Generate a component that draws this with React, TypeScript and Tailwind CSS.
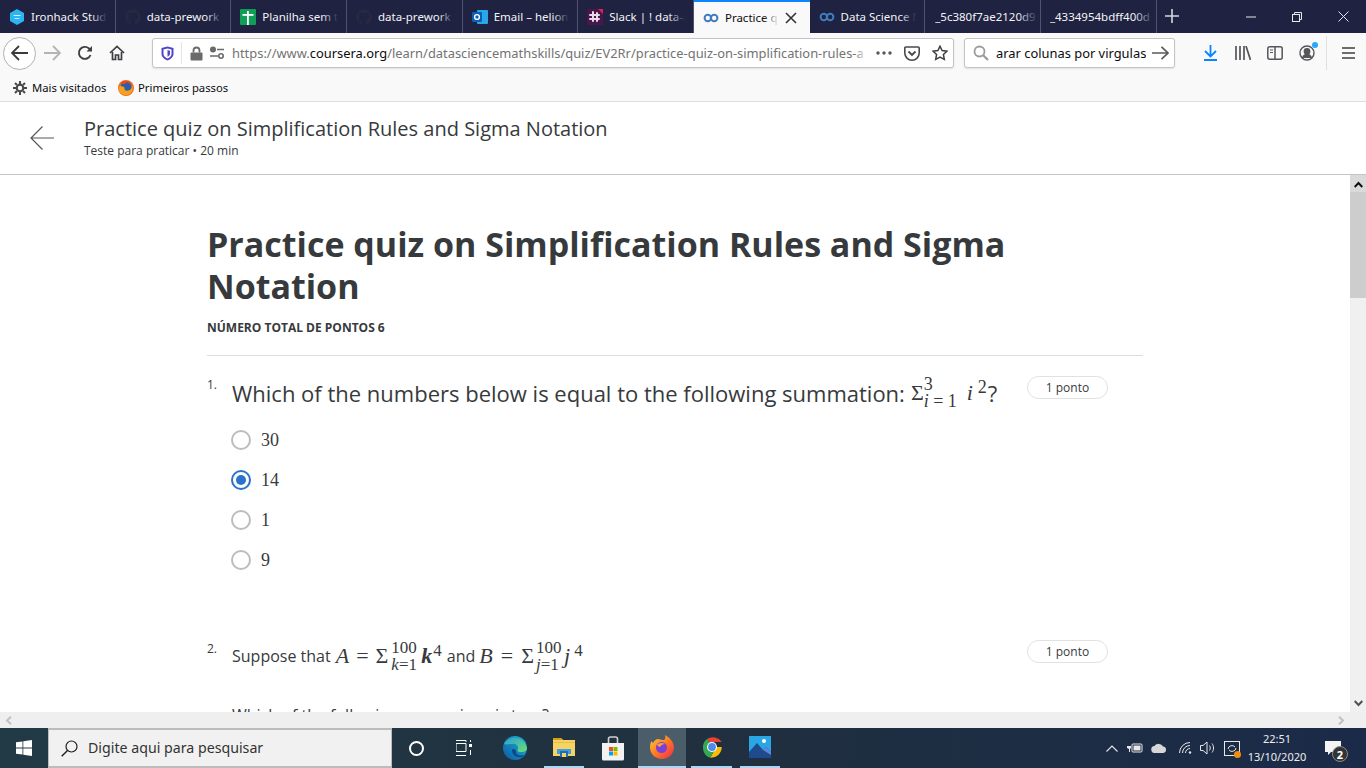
import React from "react";
import { FaGithub } from "react-icons/fa";

const ui = { fontFamily: '"Noto Sans", "Open Sans", sans-serif' };
const os = { fontFamily: '"Open Sans", sans-serif' };
const serif = { fontFamily: '"Liberation Serif", serif' };

function Infinity16({ color = "#3f7cc0" }: { color?: string }) {
  return (
    <svg width="16" height="16" viewBox="0 0 16 16" fill="none">
      <circle cx="4.8" cy="8" r="3.2" stroke={color} strokeWidth="2" />
      <circle cx="11.2" cy="8" r="3.2" stroke={color} strokeWidth="2" />
    </svg>
  );
}
function IronIcon() {
  return (
    <svg width="16" height="16" viewBox="0 0 16 16">
      <path d="M8 0l7 4v8l-7 4-7-4V4z" fill="#2bb5f2" />
      <rect x="4.5" y="6" width="7" height="1" fill="#fff" opacity=".8" />
      <rect x="5.5" y="9" width="5" height="1" fill="#fff" opacity=".7" />
    </svg>
  );
}
function SheetIcon() {
  return (
    <svg width="16" height="16" viewBox="0 0 16 16">
      <rect width="16" height="16" rx="1" fill="#0f9d58" />
      <rect x="2.500" y="5" width="11" height="1.800" fill="#fff" />
      <rect x="7" y="2" width="1.800" height="14" fill="#fff" />
    </svg>
  );
}
function OutlookIcon() {
  return (
    <svg width="16" height="16" viewBox="0 0 16 16">
      <rect x="5" y="1" width="11" height="14" rx="1" fill="#28a8ea" />
      <rect x="0" y="3" width="10" height="10" rx="1" fill="#0a5fb4" />
      <circle cx="5" cy="8" r="2.4" fill="none" stroke="#fff" strokeWidth="1.4" />
    </svg>
  );
}
function SlackIcon() {
  return (
    <svg width="16" height="16" viewBox="0 0 16 16">
      <rect width="16" height="16" fill="#4a154b" />
      <path d="M11 0h5v5z" fill="#e01e5a" />
      <g stroke="#e8dbe8" strokeWidth="2" strokeLinecap="round">
        <path d="M6 3v9" />
        <path d="M10 4v8" />
        <path d="M3 6h9" />
        <path d="M3 10h9" />
      </g>
    </svg>
  );
}

function Tab({
  icon,
  label,
  active,
}: {
  icon?: React.ReactNode;
  label: string;
  active?: boolean;
}) {
  return (
    <div
      className={
        active
          ? "relative flex h-[33px] w-[115.67px] shrink-0 items-center gap-[6px] border-t-2 border-[#0a84ff] bg-[#f9f9fa] pl-[9px] pr-[13px] text-[#0c0c0d]"
          : "relative flex h-[33px] w-[115.67px] shrink-0 items-center gap-[6px] border-r border-[#4f5270] pl-[9px] pr-[8px] text-[#f4f4f6]"
      }
    >
      {icon && <span className="flex h-4 w-4 shrink-0 items-center justify-center">{icon}</span>}
      <span className="relative flex-1 overflow-hidden whitespace-nowrap text-[11.5px] leading-[16px]">
        {label}
        <span
          className={
            active
              ? "absolute inset-y-0 right-0 w-4 bg-gradient-to-r from-transparent to-[#f9f9fa]"
              : "absolute inset-y-0 right-0 w-4 bg-gradient-to-r from-transparent to-[#1f2241]"
          }
        />
      </span>
      {active && (
        <svg width="12" height="12" viewBox="0 0 12 12" className="shrink-0" stroke="#333" strokeWidth="1.6">
          <path d="M1 1l10 10M11 1L1 11" />
        </svg>
      )}
    </div>
  );
}

function TabBar() {
  return (
    <div className="flex h-[33px] items-stretch bg-[#1f2241]" style={ui}>
      <Tab icon={<IronIcon />} label="Ironhack Stud" />
      <Tab icon={<FaGithub size={16} color="#26293f" />} label="data-prework" />
      <Tab icon={<SheetIcon />} label="Planilha sem t" />
      <Tab icon={<FaGithub size={16} color="#26293f" />} label="data-prework" />
      <Tab icon={<OutlookIcon />} label="Email – helion" />
      <Tab icon={<SlackIcon />} label="Slack | ! data-a" />
      <Tab icon={<Infinity16 />} label="Practice q" active />
      <Tab icon={<Infinity16 />} label="Data Science M" />
      <div className="flex h-[33px] w-[115.67px] shrink-0 items-center border-r border-[#4f5270] pl-[10px] pr-[2px] text-[#f4f4f6]">
        <span className="relative flex-1 overflow-hidden whitespace-nowrap text-[11.5px] leading-[16px]">
          _5c380f7ae2120d9
          <span className="absolute inset-y-0 right-0 w-5 bg-gradient-to-r from-transparent to-[#1f2241]" />
        </span>
      </div>
      <div className="flex h-[33px] w-[115.67px] shrink-0 items-center border-r border-[#4f5270] pl-[9px] pr-[2px] text-[#f4f4f6]">
        <span className="relative flex-1 overflow-hidden whitespace-nowrap text-[11.5px] leading-[16px]">
          _4334954bdff400d
          <span className="absolute inset-y-0 right-0 w-5 bg-gradient-to-r from-transparent to-[#1f2241]" />
        </span>
      </div>
      <div className="flex w-[30px] items-center justify-center pb-[1px]">
        <svg width="14" height="14" viewBox="0 0 14 14" stroke="#d8d8de" strokeWidth="1.6">
          <path d="M7 0v14M0 7h14" />
        </svg>
      </div>
      <div className="flex flex-1 items-center justify-end">
        <div className="flex w-[46px] justify-center">
          <svg width="10" height="10" viewBox="0 0 10 10" stroke="#e8e8ee"><path d="M0 5h10" /></svg>
        </div>
        <div className="flex w-[46px] justify-center">
          <svg width="10" height="10" viewBox="0 0 10 10" stroke="#e8e8ee" fill="none">
            <rect x=".5" y="2.5" width="7" height="7" />
            <path d="M2.5 2.5v-2h7v7h-2" />
          </svg>
        </div>
        <div className="flex w-[46px] justify-center">
          <svg width="11" height="11" viewBox="0 0 11 11" stroke="#e8e8ee"><path d="M.5.5l10 10M10.5.5l-10 10" /></svg>
        </div>
      </div>
    </div>
  );
}

function ToolSlot({ w, children }: { w: number; children: React.ReactNode }) {
  return (
    <div className="flex shrink-0 items-center justify-center" style={{ width: w }}>
      {children}
    </div>
  );
}

function Toolbar() {
  return (
    <div className="flex h-[40px] items-center bg-[#f9f9fa] pl-[3px]" style={ui}>
      <div className="flex h-[33px] w-[33px] shrink-0 items-center justify-center rounded-full border border-[#b1b1b3] bg-white">
        <svg width="17" height="16" viewBox="0 0 17 16" fill="none" stroke="#3a3a3c" strokeWidth="1.8">
          <path d="M1 8h16M8 1L1 8l7 7" />
        </svg>
      </div>
      <ToolSlot w={33}>
        <svg width="17" height="16" viewBox="0 0 17 16" fill="none" stroke="#b4b4b6" strokeWidth="1.8">
          <path d="M0 8h16M9 1l7 7-7 7" />
        </svg>
      </ToolSlot>
      <ToolSlot w={32}>
        <svg width="16" height="16" viewBox="0 0 16 16" fill="none" stroke="#3f3f42" strokeWidth="1.9">
          <path d="M13.5 10A6 6 0 1 1 12 3.5L14 5.5" />
          <path d="M15 1v5.5H9.5" fill="#3f3f42" stroke="none" />
        </svg>
      </ToolSlot>
      <ToolSlot w={32}>
        <svg width="16" height="16" viewBox="0 0 16 16" fill="none" stroke="#3f3f42" strokeWidth="1.7">
          <path d="M1 8l7-6.5L15 8" />
          <path d="M3.5 7v7.5h3V10h3v4.5h3V7" />
        </svg>
      </ToolSlot>
      <div className="ml-[19px] flex h-[30px] w-[802px] shrink-0 items-center rounded-[3px] border border-[#c4c4c6] bg-white shadow-[0_1px_2px_rgba(0,0,0,0.1)]">
        <span className="ml-[6px] flex w-[16px] justify-center">
          <svg width="13" height="15" viewBox="0 0 13 15">
            <path d="M6.5 0.5L12.5 2v6c0 3-3 5.5-6 6.5-3-1-6-3.5-6-6.5V2z" fill="#4f46c8" />
            <path d="M6.5 2.5L10.5 3.5v4.5c0 2-2 3.7-4 4.5-2-.8-4-2.5-4-4.5V3.5z" fill="#fff" />
            <path d="M6.5 4L9 4.7v3c0 1.3-1.2 2.4-2.500 3z" fill="#4f46c8" />
          </svg>
        </span>
        <span className="ml-[6px] h-[22px] w-px bg-[#e3e3e5]" />
        <span className="ml-[8px] flex">
          <svg width="13" height="15" viewBox="0 0 13 15">
            <path d="M3.5 6.5V4.5a3 3 0 0 1 6 0v2" fill="none" stroke="#6a6a6c" strokeWidth="1.8" />
            <rect x="0.5" y="6.5" width="12" height="8" rx="1" fill="#6a6a6c" />
          </svg>
        </span>
        <span className="ml-[6px] flex">
          <svg width="16" height="14" viewBox="0 0 16 14" fill="none" stroke="#6a6a6c" strokeWidth="1.6">
            <circle cx="4" cy="3.5" r="2.2" fill="#6a6a6c" />
            <path d="M8 3.5h7M1 10h8" />
            <circle cx="12" cy="10" r="2.2" />
          </svg>
        </span>
        <span className="relative ml-[7px] w-[635px] overflow-hidden whitespace-nowrap text-[12.9px] leading-[18px] text-[#737373]">
          https://www.<span className="text-[#0c0c0d]">coursera.org</span>/learn/datasciencemathskills/quiz/EV2Rr/practice-quiz-on-simplification-rules-a
          <span className="absolute inset-y-0 right-0 w-3 bg-gradient-to-r from-transparent to-white" />
        </span>
        <span className="ml-[9px] flex">
          <svg width="16" height="4" viewBox="0 0 16 4" fill="#56565a">
            <circle cx="2" cy="2" r="1.7" />
            <circle cx="8" cy="2" r="1.7" />
            <circle cx="14" cy="2" r="1.7" />
          </svg>
        </span>
        <span className="ml-[12px] flex">
          <svg width="16" height="15" viewBox="0 0 16 15" fill="none" stroke="#4a4a4d" strokeWidth="1.6">
            <path d="M1.8 1h12.4a1 1 0 0 1 1 1v5a7.2 7.2 0 0 1-14.4 0V2a1 1 0 0 1 1-1z" />
            <path d="M4.5 5.5L8 9l3.5-3.5" strokeWidth="1.9" />
          </svg>
        </span>
        <span className="ml-[6px] flex h-full w-[27px] items-center justify-center">
          <svg width="16" height="16" viewBox="0 0 16 16" fill="none" stroke="#3f3f42" strokeWidth="1.5">
            <path d="M8 1.2l2.1 4.4 4.8.6-3.5 3.3.9 4.8L8 12l-4.3 2.3.9-4.8L1.1 6.2l4.8-.6z" />
          </svg>
        </span>
      </div>
      <div className="ml-[10px] flex h-[30px] w-[211px] shrink-0 items-center rounded-[3px] border border-[#c4c4c6] bg-white shadow-[0_1px_2px_rgba(0,0,0,0.1)]">
        <span className="ml-[8px] flex">
          <svg width="16" height="16" viewBox="0 0 16 16" fill="none" stroke="#9b9b9d" strokeWidth="1.8">
            <circle cx="6.5" cy="6.5" r="5" />
            <path d="M10 10l5 5" strokeWidth="2.2" />
          </svg>
        </span>
        <span className="ml-[7px] w-[150px] overflow-hidden whitespace-nowrap text-[12.9px] leading-[18px] text-[#0c0c0d]">
          arar colunas por virgulas
        </span>
        <span className="ml-[6px] flex">
          <svg width="17" height="14" viewBox="0 0 17 14" fill="none" stroke="#5a5a5d" strokeWidth="1.7">
            <path d="M0 7h16M9.5 .8L16 7l-6.5 6.2" />
          </svg>
        </span>
      </div>
      <ToolSlot w={72}>
        <svg width="15" height="16" viewBox="0 0 15 16" fill="none" stroke="#0a84ff" strokeWidth="1.8" className="ml-[-1px]">
          <path d="M7.5 0v11M2 6l5.500 5.500L13 6M1 15h13" />
        </svg>
      </ToolSlot>
      <div className="flex shrink-0 items-center">
        <div className="ml-[-20px] flex w-[32px] justify-center">
          <svg width="16" height="14" viewBox="0 0 16 14" fill="none" stroke="#56565a" strokeWidth="1.7">
            <path d="M1 0v14M5 0v14M9 0v14M11 0l4.500 14" />
          </svg>
        </div>
        <div className="flex w-[32px] justify-center">
          <svg width="16" height="14" viewBox="0 0 16 14" fill="none" stroke="#56565a" strokeWidth="1.5">
            <rect x=".8" y=".8" width="14.400" height="12.400" rx="2" />
            <path d="M8 .8v12.400" />
            <path d="M3 4h3M3 6.500h3" strokeWidth="1" />
          </svg>
        </div>
        <div className="relative flex w-[32px] justify-center">
          <svg width="16" height="16" viewBox="0 0 16 16" fill="none" stroke="#56565a" strokeWidth="1.4">
            <circle cx="8" cy="8" r="7" />
            <circle cx="8" cy="6.500" r="2.700" fill="#56565a" />
            <path d="M3.500 13c.8-2.500 2.500-3.500 4.500-3.500s3.700 1 4.500 3.500" fill="#56565a" />
          </svg>
          <span className="absolute right-[5px] top-[-3px] h-[6px] w-[6px] rounded-full bg-[#2aa7f5]" />
        </div>
        <span className="ml-[3px] h-[34px] w-px bg-[#e0e0e2]" />
        <div className="ml-[11px] flex w-[20px] justify-center">
          <svg width="13" height="12" viewBox="0 0 13 12" stroke="#3f3f42" strokeWidth="1.6">
            <path d="M0 1h13M0 6h13M0 11h13" />
          </svg>
        </div>
      </div>
    </div>
  );
}

function Bookmarks() {
  return (
    <div className="flex h-[29px] items-center border-b border-[#dedee0] bg-[#f9f9fa] pl-[13px] pt-[2px] text-[11.3px] text-[#0c0c0d]" style={ui}>
      <svg width="14" height="14" viewBox="0 0 14 14" fill="none" stroke="#4a4a4d">
        <circle cx="7" cy="7" r="3.300" strokeWidth="2.200" />
        <path d="M7 0v3M7 11v3M0 7h3M11 7h3M2 2l2 2M10 10l2 2M12 2l-2 2M4 10l-2 2" strokeWidth="2" />
      </svg>
      <span className="ml-[5px] w-[74px] whitespace-nowrap">Mais visitados</span>
      <span className="ml-[12px] flex">
        <svg width="16" height="16" viewBox="0 0 16 16">
          <circle cx="8" cy="8" r="8" fill="#f26a1b" />
          <circle cx="8" cy="7" r="5.500" fill="#2f5ea8" />
          <path d="M2 5c1 2 3 1 4 2s0 2 1 3 4 1 6-1c1-1 1-3 1-4 2 4 0 10-6 10S-1 10 2 5z" fill="#f3a11f" />
          <path d="M3 3c2-3 7-3 10 0-3-1-5 0-6 1-2 0-3 0-4-1z" fill="#e8481f" />
        </svg>
      </span>
      <span className="ml-[4px]">Primeiros passos</span>
    </div>
  );
}

function CourseHeader() {
  return (
    <div className="flex h-[73px] items-center border-b border-[#c4c4c4] bg-white" style={os}>
      <div className="flex w-[84px] shrink-0 justify-center pb-[1px]">
        <svg width="24" height="24" viewBox="0 0 24 24" fill="none" stroke="#55575a" strokeWidth="1.200" className="ml-[-1px]">
          <path d="M24 12H1M12.500 .5L1 12l11.500 11.500" />
        </svg>
      </div>
      <div className="flex flex-col pb-[3px]">
        <span className="text-[20px] leading-[28px] text-[#373a3c]">Practice quiz on Simplification Rules and Sigma Notation</span>
        <span className="text-[12px] leading-[15px] text-[#373a3c]">Teste para praticar • 20 min</span>
      </div>
    </div>
  );
}

function Radio({ label, checked }: { label: string; checked?: boolean }) {
  return (
    <div className="flex h-[40px] items-center">
      <span
        className={
          checked
            ? "flex h-[20px] w-[20px] items-center justify-center rounded-full border-[2px] border-[#2a73cc] bg-white"
            : "flex h-[20px] w-[20px] items-center justify-center rounded-full border-[2px] border-[#bdbdbd] bg-white"
        }
      >
        {checked && <span className="h-[10px] w-[10px] rounded-full bg-[#2a73cc]" />}
      </span>
      <span className="ml-[10px] text-[18px] leading-[24px] text-[#373a3c]" style={serif}>
        {label}
      </span>
    </div>
  );
}

function Pill() {
  return (
    <span className="flex h-[23px] w-[81px] shrink-0 items-center justify-center rounded-full border border-[#e1e1e1] text-[12px] text-[#373a3c]">
      1 ponto
    </span>
  );
}

function Stack({
  top,
  bottom,
  size,
  lh,
  w,
}: {
  top: string;
  bottom: React.ReactNode;
  size: number;
  lh: number;
  w?: number;
}) {
  return (
    <span
      className="inline-flex flex-col items-start align-middle"
      style={{ fontSize: size, lineHeight: `${lh}px`, width: w }}
    >
      <span>{top}</span>
      <span className="whitespace-nowrap">{bottom}</span>
    </span>
  );
}

function Content() {
  return (
    <div className="flex min-w-0 flex-1 flex-col overflow-hidden bg-white pl-[207px] pt-[48px]" style={os}>
      <div className="w-[936px]">
        <h1 className="text-[34px] font-bold leading-[42px] text-[#373a3c]">
          Practice quiz on Simplification Rules and Sigma Notation
        </h1>
        <div className="mt-[13px] text-[12px] font-bold leading-[16px] text-[#373a3c]">NÚMERO TOTAL DE PONTOS 6</div>
        <div className="mt-[19px] h-px bg-[#dddddd]" />

        <div className="mt-[20px] flex h-[37px] items-start">
          <span className="w-[25px] shrink-0 pt-[1px] text-[12px] leading-[16px] text-[#373a3c]">1.</span>
          <span className="flex flex-1 items-center whitespace-nowrap text-[22px] leading-[24px] text-[#373a3c]">
            Which of the numbers below is equal to the following summation:
            <span className="ml-[6px] flex items-center" style={serif}>
              <span className="text-[22px]">Σ</span>
              <Stack
                size={18}
                lh={17}
                w={44}
                top="3"
                bottom={
                  <>
                    <i>i</i> = 1
                  </>
                }
              />
              <i className="ml-[-1px] text-[22px]">i</i>
              <span className="mb-[12px] ml-[5px] text-[18px] leading-[16px]">2</span>
            </span>
            <span className="ml-[1px]">?</span>
          </span>
          <span className="ml-[10px] mr-[35px]">
            <Pill />
          </span>
        </div>

        <div className="mt-[7px] flex flex-col pl-[24px]">
          <Radio label="30" />
          <Radio label="14" checked />
          <Radio label="1" />
          <Radio label="9" />
        </div>

        <div className="mt-[59px] flex h-[40px] items-start">
          <span className="w-[25px] shrink-0 pt-[2px] text-[12px] leading-[16px] text-[#373a3c]">2.</span>
          <span className="flex flex-1 items-center whitespace-nowrap text-[16px] leading-[20px] text-[#373a3c]">
            Suppose that
            <span className="ml-[5px] flex items-center text-[22px]" style={serif}>
              <i>A</i>
              <span className="mx-[7px]">=</span>
              <span>Σ</span>
              <span className="ml-[3px] flex">
                <Stack
                  size={17}
                  lh={17}
                  w={28}
                  top="100"
                  bottom={
                    <>
                      <i>k</i>=1
                    </>
                  }
                />
              </span>
              <i className="ml-[2px] font-bold">k</i>
              <span className="mb-[10px] ml-[1px] text-[17px] leading-[14px]">4</span>
            </span>
            <span className="ml-[5px]">and</span>
            <span className="ml-[4px] flex items-center text-[22px]" style={serif}>
              <i>B</i>
              <span className="mx-[8px]">=</span>
              <span>Σ</span>
              <span className="ml-[2px] flex">
                <Stack
                  size={17}
                  lh={17}
                  w={28}
                  top="100"
                  bottom={
                    <>
                      <i>j</i>=1
                    </>
                  }
                />
              </span>
              <i>j</i>
              <span className="mb-[10px] ml-[4px] text-[17px] leading-[14px]">4</span>
            </span>
          </span>
          <span className="ml-[10px] mr-[35px] pt-[1px]">
            <Pill />
          </span>
        </div>

        <div className="ml-[25px] mt-[24px] text-[16px] leading-[24px] text-[#373a3c]">Which of the following expressions is true?</div>
      </div>
    </div>
  );
}

function VScroll() {
  return (
    <div className="flex w-[16px] shrink-0 flex-col items-stretch bg-[#f0f0f0]">
      <div className="flex h-[17px] items-center justify-center bg-[#dadada] pt-[1px]">
        <svg width="9" height="7" viewBox="0 0 9 7" fill="none" stroke="#111111" strokeWidth="2"><path d="M.7 6l3.800-4 3.800 4" /></svg>
      </div>
      <div className="h-[106px] bg-[#cdcdcd]" />
      <div className="flex-1" />
      <div className="flex h-[17px] items-center justify-center">
        <svg width="9" height="7" viewBox="0 0 9 7" fill="none" stroke="#505050" strokeWidth="2"><path d="M.7 1l3.800 4 3.800-4" /></svg>
      </div>
    </div>
  );
}

function HScroll() {
  return (
    <div className="flex h-[16px] shrink-0 items-center justify-between bg-[#efefef] pl-[5px] pr-[21px]">
      <svg width="7" height="9" viewBox="0 0 7 9" fill="none" stroke="#c0c0c0" strokeWidth="2"><path d="M6 .7L2 4.500l4 3.800" /></svg>
      <svg width="7" height="9" viewBox="0 0 7 9" fill="none" stroke="#c0c0c0" strokeWidth="2"><path d="M1 .7l4 3.800-4 3.800" /></svg>
    </div>
  );
}

function TaskIcon({
  w,
  ml,
  active,
  under,
  children,
}: {
  w: number;
  ml?: number;
  active?: boolean;
  under?: boolean;
  children: React.ReactNode;
}) {
  return (
    <div
      className={
        active
          ? "flex h-full shrink-0 items-center justify-center border-b-2 border-[#a9d8f7] bg-[#4a5d68]"
          : under
          ? "flex h-full shrink-0 items-center justify-center border-b-2 border-[#a9d8f7]"
          : "flex h-full shrink-0 items-center justify-center"
      }
      style={{ width: w, marginLeft: ml }}
    >
      {children}
    </div>
  );
}

function Taskbar() {
  return (
    <div className="flex h-[40px] shrink-0 items-center bg-gradient-to-r from-[#213a45] via-[#20303f] to-[#1b2a48] text-white" style={ui}>
      <div className="flex h-full w-[48px] shrink-0 items-center justify-center">
        <svg width="16" height="16" viewBox="0 0 16 16" fill="#fff">
          <path d="M0 2.300l6.500-.9v6.200H0zM7.300 1.300L16 0v7.600H7.300zM0 8.400h6.500v6.200L0 13.700zM7.300 8.400H16V16l-8.700-1.200z" />
        </svg>
      </div>
      <div className="flex h-full w-[344px] shrink-0 items-center border border-b-2 border-t-2 border-[#bcbcbc] border-t-[#bcbcbc] bg-[#f1f1f1] pl-[12px]">
        <svg width="17" height="17" viewBox="0 0 17 17" fill="none" stroke="#1c1c1c" strokeWidth="1.200">
          <circle cx="10.500" cy="6.500" r="5.500" />
          <path d="M6.500 10.500L.7 16.300" strokeWidth="1.400" />
        </svg>
        <span className="ml-[10px] text-[14.2px] text-[#333]">Digite aqui para pesquisar</span>
      </div>
      <TaskIcon w={48}>
        <span className="h-[15px] w-[15px] rounded-full border-[2px] border-white" />
      </TaskIcon>
      <TaskIcon w={47}>
        <svg width="16" height="16" viewBox="0 0 16 16" fill="none" stroke="#fff" strokeWidth="1">
          <path d="M0 .5h10M0 15.500h10" />
          <path d="M10 .5v1.500M0 3.500h10v8H0z" />
          <rect x="13" y="4" width="3" height="3" fill="#fff" stroke="none" />
          <path d="M14.500 0v2M14.500 10v5" />
        </svg>
      </TaskIcon>
      <TaskIcon w={56}>
        <svg width="24" height="24" viewBox="0 0 24 24">
          <defs>
            <linearGradient id="edgeA" x1="0" y1="1" x2="1" y2="0">
              <stop offset="0" stopColor="#0c59a4" />
              <stop offset="1" stopColor="#1fb6d8" />
            </linearGradient>
            <linearGradient id="edgeB" x1="0" y1="0" x2="1" y2="1">
              <stop offset="0" stopColor="#2b9fd8" />
              <stop offset="1" stopColor="#6ce070" />
            </linearGradient>
          </defs>
          <circle cx="12" cy="12" r="12" fill="url(#edgeA)" />
          <path d="M1 8C4 1 20-2 24 12c0 3-3 4-6 4-4 0-4-2-3-3 1-3-2-6-6-5-3 0-6 1-8 0z" fill="url(#edgeB)" />
          <path d="M9 14c0 5 4 8 10 7l2-2c-5 1-8 0-8-3 0-2-1-3-2-3-1 0-2 0-2 1z" fill="#0c4a8a" />
        </svg>
      </TaskIcon>
      <TaskIcon w={40} ml={1} under>
        <svg width="22" height="20" viewBox="0 0 22 20">
          <path d="M0 1h8l2 2h12v16H0z" fill="#f6d365" />
          <path d="M0 1h8l2 2H0z" fill="#d99e14" />
          <path d="M0 5h22v1H0z" fill="#e9bd40" />
          <rect x="4" y="12" width="14" height="5" fill="#3d9fe0" />
          <rect x="7" y="14" width="8" height="6" fill="#1f6cb0" />
          <rect x="9" y="16" width="4" height="4" fill="#f6d365" />
        </svg>
      </TaskIcon>
      <TaskIcon w={54}>
        <svg width="24" height="25" viewBox="0 0 24 25" className="ml-[3px]">
          <path d="M7.500 7V3a2 2 0 0 1 2-2h5a2 2 0 0 1 2 2v4" fill="none" stroke="#d0d0d0" strokeWidth="1.600" />
          <path d="M1 7h22v16a1.500 1.500 0 0 1-1.500 1.500h-19A1.500 1.500 0 0 1 1 23z" fill="#f2f2f2" />
          <rect x="8" y="11" width="4" height="4" fill="#f25022" />
          <rect x="12.500" y="11" width="4" height="4" fill="#7fba00" />
          <rect x="8" y="15.500" width="4" height="4" fill="#00a4ef" />
          <rect x="12.500" y="15.500" width="4" height="4" fill="#ffb900" />
        </svg>
      </TaskIcon>
      <TaskIcon w={48} active>
        <svg width="24" height="24" viewBox="0 0 24 24">
          <defs>
            <linearGradient id="fx" x1="0" y1="0" x2="1" y2="1">
              <stop offset="0" stopColor="#ffd23c" />
              <stop offset=".5" stopColor="#ff7a20" />
              <stop offset="1" stopColor="#f0245a" />
            </linearGradient>
          </defs>
          <path d="M12 24C5 24 0 19 0 12c0-3 1-5 1.500-6 .5 1 1 1.500 1.500 2 1-2 3-4 5-4 2 0 3 1 5 1 2 0 3-2 2-5 4 2 9 7 9 12 0 7-5 12-12 12z" fill="url(#fx)" />
          <circle cx="11.500" cy="12.500" r="5.500" fill="#7a3fd6" />
          <path d="M7 10c1-2 5-3 8-1-2 0-4 1-5 3-1 0-2-1-3-2z" fill="#f9a23a" />
        </svg>
      </TaskIcon>
      <TaskIcon w={41} ml={5} under>
        <svg width="22" height="22" viewBox="0 0 48 48">
          <path d="M24 24L13.600 6A24 24 0 0 1 45.300 13H24z" fill="#ea4335" />
          <path d="M24 24H45.300A24 24 0 0 1 20 47.600L31 28z" fill="#fbbc05" />
          <path d="M24 24l7 4-11 19.600A24 24 0 0 1 13.600 6L24 24z" fill="#34a853" />
          <circle cx="24" cy="24" r="11" fill="#fff" />
          <circle cx="24" cy="24" r="8.500" fill="#4a8cf0" />
        </svg>
      </TaskIcon>
      <TaskIcon w={40} ml={8} under>
        <svg width="22" height="22" viewBox="0 0 22 22">
          <rect width="22" height="22" fill="#2aa5e6" />
          <circle cx="15" cy="5" r="2" fill="#fff" />
          <path d="M0 16L8 7l6 7 3-3 5 5v6H0z" fill="#1f4a8c" />
          <path d="M14 14l3-3 5 5v3z" fill="#5f86d8" />
        </svg>
      </TaskIcon>
      <div className="flex-1" />
      <div className="flex h-full items-center pr-[25px]">
        <svg width="12" height="7" viewBox="0 0 12 7" fill="none" stroke="#e8e8e8" strokeWidth="1.100">
          <path d="M.5 6.500L6 1l5.500 5.500" />
        </svg>
        <svg width="16" height="10" viewBox="0 0 16 10" className="ml-[9px]" fill="#e8e8e8">
          <rect x="5" y="1" width="10" height="8" rx="1" fill="none" stroke="#e8e8e8" />
          <rect x="6.500" y="2.500" width="7" height="5" />
          <path d="M0 3h4v2l-1 1v3H2V6L0 5z" />
        </svg>
        <svg width="16" height="10" viewBox="0 0 16 10" className="ml-[8px]" fill="#d7d7d7">
          <path d="M4 10a3.500 3.500 0 0 1-.5-7A5 5 0 0 1 12 3.500a3.300 3.300 0 0 1 .5 6.500z" />
        </svg>
        <svg width="13" height="12" viewBox="0 0 13 12" className="ml-[12px]" fill="none" stroke="#e8e8e8">
          <path d="M.5 11A10.500 10.500 0 0 1 11 .5M3.500 11A7.500 7.500 0 0 1 11 3.500M6.500 11A4.500 4.500 0 0 1 11 6.500" />
          <circle cx="11" cy="10.500" r="1.200" fill="#e8e8e8" stroke="none" />
        </svg>
        <svg width="16" height="14" viewBox="0 0 16 14" className="ml-[8px]" fill="none" stroke="#e8e8e8">
          <path d="M.5 4.500h2.500L7 1v12L3 9.500H.5z" />
          <path d="M9.500 4.500c1 1.500 1 3.500 0 5M12 2.500c2 2.500 2 6.500 0 9" />
        </svg>
        <div className="relative ml-[8px] flex">
          <svg width="16" height="15" viewBox="0 0 16 15" fill="none" stroke="#e8e8e8">
            <rect x=".5" y=".5" width="15" height="14" />
            <path d="M4 8a4 4 0 0 1 7-2M12 7a4 4 0 0 1-7 2" />
          </svg>
          <span className="absolute bottom-[-2px] right-[-1px] h-[7px] w-[7px] rounded-full bg-[#f28c0f]" />
        </div>
        <div className="ml-[2px] flex w-[70px] flex-col items-center text-[11px] leading-[18px] text-[#eeeeee]">
          <span>22:51</span>
          <span>13/10/2020</span>
        </div>
        <div className="relative ml-[13px] flex">
          <svg width="16" height="14" viewBox="0 0 16 14" fill="#f4f4f4">
            <path d="M0 0h16v11h-10l-3 3v-3H0z" />
          </svg>
          <span className="absolute right-[-7px] top-[5px] flex h-[16px] w-[16px] items-center justify-center rounded-full border border-[#8a8a8a] bg-[#333] text-[11px] font-bold leading-none text-white">
            2
          </span>
        </div>
      </div>
    </div>
  );
}

export default function App() {
  return (
    <div className="flex h-[768px] w-[1366px] flex-col overflow-hidden bg-white">
      <TabBar />
      <Toolbar />
      <Bookmarks />
      <CourseHeader />
      <div className="flex min-h-0 flex-1">
        <div className="flex min-w-0 flex-1 flex-col">
          <Content />
        </div>
        <VScroll />
      </div>
      <HScroll />
      <Taskbar />
    </div>
  );
}
